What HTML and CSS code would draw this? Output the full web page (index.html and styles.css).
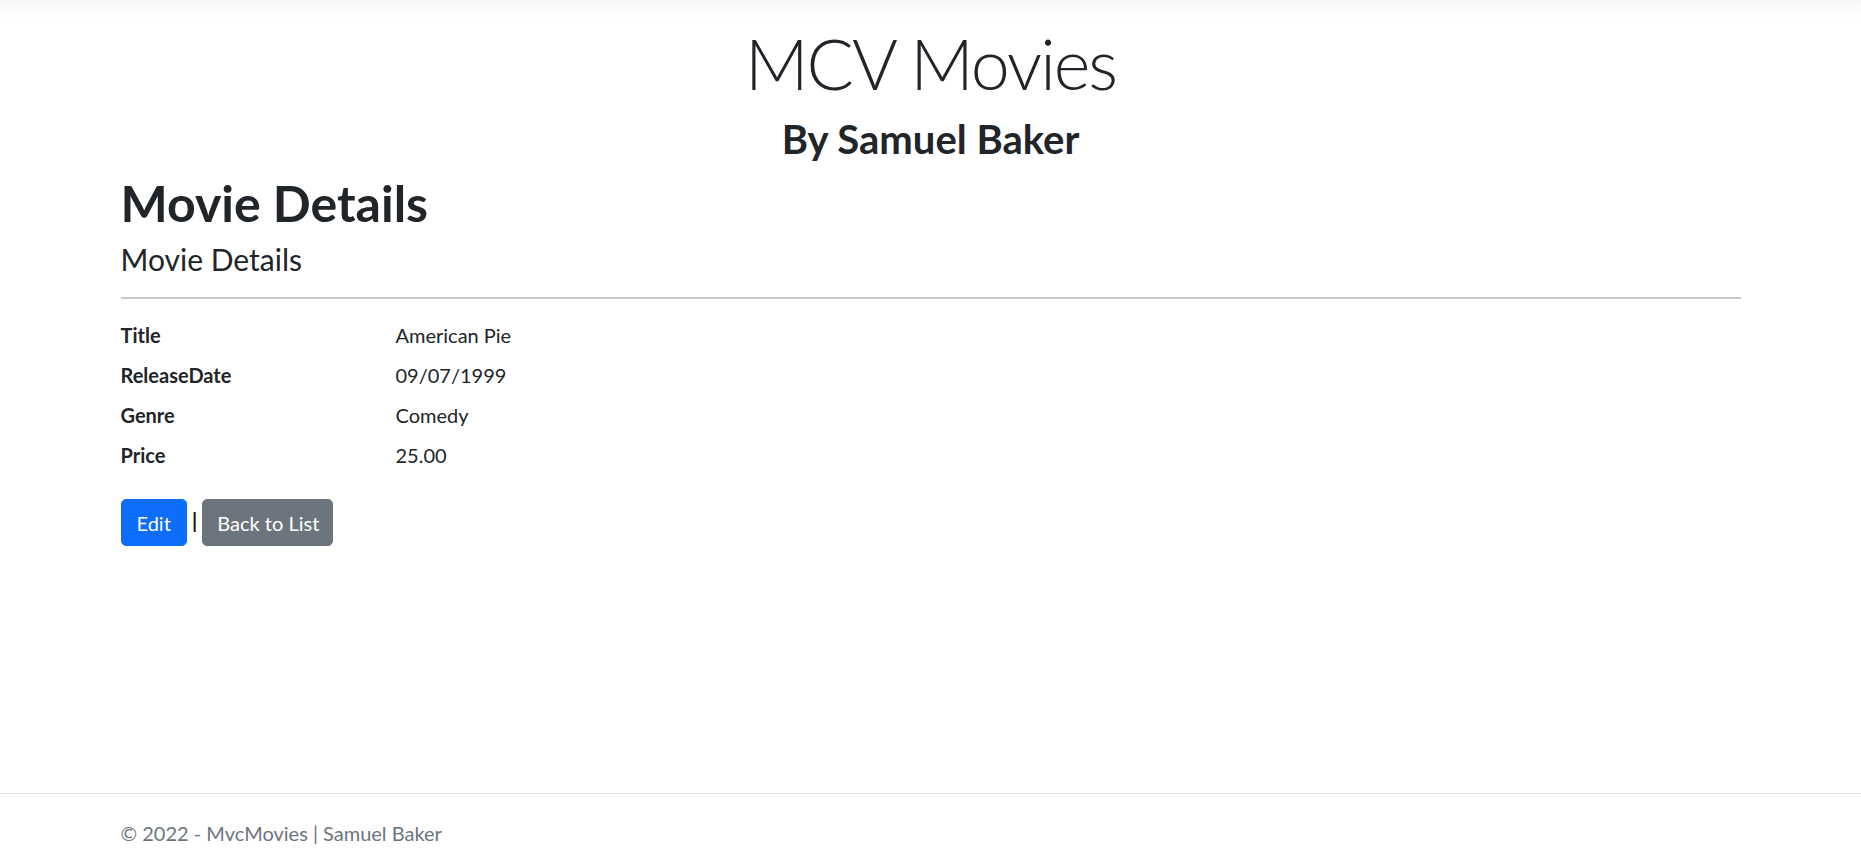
FILE: index.html
```html
<!DOCTYPE html>
<html lang="en">
<head>
<meta charset="utf-8">
<title>Details - MvcMovies</title>
<link rel="stylesheet" href="styles.css">
</head>
<body>
<header class="site-header"></header>
<main class="container main">
  <div class="brand">
    <h1 class="display">MCV Movies</h1>
    <h2 class="byline">By Samuel Baker</h2>
  </div>
  <h1 class="page-title">Movie Details</h1>
  <div>
    <h4 class="section-title">Movie Details</h4>
    <hr class="rule">
    <dl class="details">
      <dt>Title</dt>
      <dd>American Pie</dd>
      <dt>ReleaseDate</dt>
      <dd>09/07/1999</dd>
      <dt>Genre</dt>
      <dd>Comedy</dd>
      <dt>Price</dt>
      <dd>25.00</dd>
    </dl>
  </div>
  <div class="actions">
    <a class="btn btn-primary" href="#">Edit</a> <span class="sep">|</span> <a class="btn btn-secondary" href="#">Back to List</a>
  </div>
</main>
<footer class="footer">
  <div class="container footer-inner">&copy; 2022 - MvcMovies | Samuel Baker</div>
</footer>
</body>
</html>
```
FILE: styles.css
```css
html, body {
  margin: 0;
  padding: 0;
}
body {
  font-family: Lato, "Open Sans", "Liberation Sans", sans-serif;
  font-size: 20px;
  line-height: 1.5;
  color: #212529;
  background: #fff;
  min-height: 100vh;
  display: flex;
  flex-direction: column;
}
.site-header {
  height: 0;
  box-shadow: 0 0 16px 5px rgba(0, 0, 0, 0.07);
}
.container {
  width: 100%;
  max-width: 1650px;
  padding: 0 15px;
  margin: 0 auto;
  box-sizing: border-box;
}
.main {
  padding-top: 21px;
  flex: 1 0 auto;
}
.brand {
  text-align: center;
}
.display {
  font-size: 70px;
  font-weight: 300;
  line-height: 1.2;
  letter-spacing: -2px;
  margin: 0 0 10px;
}
.byline {
  font-size: 40px;
  font-weight: 700;
  line-height: 1.2;
  margin: 0 0 10px;
}
.page-title {
  font-size: 50px;
  font-weight: 700;
  line-height: 1.2;
  margin: 0 0 8px;
}
.section-title {
  font-size: 30px;
  font-weight: 400;
  line-height: 1.2;
  margin: 0;
}
.rule {
  height: 0;
  border: 0;
  border-top: 2px solid #c8c9ca;
  margin: 20px 0 20px;
}
.details {
  display: grid;
  grid-template-columns: 275px 1fr;
  padding-top: 1px;
  margin: 0 0 19px;
}
.details dt {
  font-weight: 700;
  margin: 0;
}
.details dd {
  margin: 0 0 10px;
}
.actions {
  line-height: 1.5;
}
.sep {
  font-weight: 700;
  color: #111;
}
.btn {
  display: inline-block;
  padding: 7.5px 15px;
  border: 1px solid transparent;
  border-radius: 5px;
  color: #fff;
  text-decoration: none;
  line-height: 30px;
  font-size: 20px;
  vertical-align: middle;
}
.btn-primary {
  background: #0d6efd;
  border-color: #0d6efd;
}
.btn-secondary {
  background: #6c757d;
  border-color: #6c757d;
  padding-left: 14px;
  padding-right: 13px;
}
.footer {
  border-top: 1px solid #e3e5e8;
  color: #6c757d;
  white-space: nowrap;
}
.footer-inner {
  line-height: 70px;
  padding-top: 4px;
}
```
